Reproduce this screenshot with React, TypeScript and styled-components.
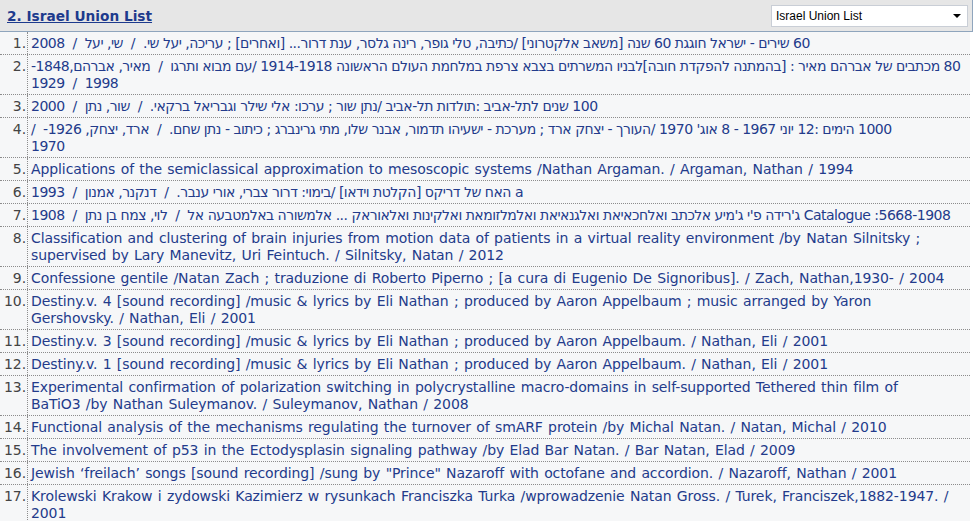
import React from "react";
import styled, { createGlobalStyle } from "styled-components";

const Global = createGlobalStyle`
  html, body { margin: 0; padding: 0; background: #ffffff; }
  body { font-family: "DejaVu Sans", Verdana, sans-serif; }
`;

const Page = styled.div`
  width: 977px;
  height: 521px;
  overflow: hidden;
  background: #ffffff;
`;

const Header = styled.div`
  width: 973px;
  height: 32px;
  box-sizing: border-box;
  background: #e6e6e6;
  border-right: 1px solid #8fa5bd;
  border-bottom: 1px solid #8fa5bd;
  display: flex;
  align-items: center;
  justify-content: space-between;
  padding: 0 4px 0 7px;
`;

const Title = styled.a`
  font-family: "DejaVu Sans", Verdana, sans-serif;
  font-weight: bold;
  font-size: 13.7px;
  color: #1d3a8d;
  text-decoration: underline;
  cursor: pointer;
`;

const SelectBox = styled.div`
  width: 197px;
  height: 22px;
  box-sizing: border-box;
  background: #ffffff;
  border: 1px solid #c9ced6;
  display: flex;
  align-items: center;
  justify-content: space-between;
  padding: 0 6px 0 4px;
  font-family: "Liberation Sans", Arial, sans-serif;
  font-size: 12px;
  color: #000;
`;

const Arrow = styled.span`
  width: 0;
  height: 0;
  border-left: 4px solid transparent;
  border-right: 4px solid transparent;
  border-top: 4px solid #000;
`;

const List = styled.div`
  width: 970px;
  background: #f6f7f8;
`;

const Row = styled.div`
  display: flex;
  border-bottom: 1px dotted #8c8c8c;
`;

const Num = styled.div`
  width: 28px;
  flex: none;
  box-sizing: border-box;
  text-align: right;
  padding: 3px 1px 2px 0;
  border-right: 1px dotted #8c8c8c;
  font-size: 14px;
  letter-spacing: -0.1px;
  line-height: 17px;
  color: #444;
`;

const Cell = styled.div`
  flex: 1;
  min-width: 0;
  padding: 3px 5px 2px 3px;
  font-size: 14px;
  letter-spacing: -0.1px;
  word-spacing: 1px;
  line-height: 17px;
  text-align: left;
`;

const Link = styled.a`
  color: #233b8b;
  text-decoration: none;
  cursor: pointer;
`;

const Rtl = styled.bdi`
  letter-spacing: -0.5px;
  word-spacing: 0;
`;

const S = "\u00a0 /\u00a0 ";
const N = "\u00a0/";

const items: React.ReactNode[] = [
  <Rtl dir="rtl">{`60 שירים - ישראל חוגגת 60 שנה [משאב אלקטרוני] /כתיבה, טלי גופר, רינה גלסר, ענת דרור... [ואחרים] ; עריכה, יעל שי.${S}שי, יעל${S}2008`}</Rtl>,
  <>
    <Rtl dir="rtl">{`80 מכתבים של אברהם מאיר : [בהמתנה להפקדת חובה]לבניו המשרתים בצבא צרפת במלחמת העולם הראשונה 1914-1918 /עם מבוא ותרגו${S}מאיר, אברהם,1848-`}</Rtl>
    <br />
    <Rtl dir="ltr">{`1929\u00a0 /\u00a0 1998`}</Rtl>
  </>,
  <Rtl dir="rtl">{`100 שנים לתל-אביב :תולדות תל-אביב /נתן שור ; ערכו: אלי שילר וגבריאל ברקאי.${S}שור, נתן${S}2000`}</Rtl>,
  <Rtl dir="rtl">
    {`1000 הימים :12 יוני 1967 - 8 אוג' 1970 /העורך - יצחק ארד ; מערכת - ישעיהו תדמור, אבנר שלו, מתי גרינברג ; כיתוב - נתן שחם.${S}ארד, יצחק, 1926-\u00a0 /`}
    <br />
    1970
  </Rtl>,
  `Applications of the semiclassical approximation to mesoscopic systems${N}Nathan Argaman.${N} Argaman, Nathan${N} 1994`,
  <Rtl dir="rtl">{`a האח של דריקס [הקלטת וידאו] /בימוי: דרור צברי, אורי ענבר.${S}דנקנר, אמנון${S}1993`}</Rtl>,
  <Rtl dir="rtl">
    <bdi dir="ltr">Catalogue :5668-1908</bdi>
    {` ג'רידה פ'י ג'מיע אלכתב ואלחכאיאת ואלגנאיאת ואלמלזומאת ואלקינות ואלאוראק ... אלמשורה באלמטבעה אל${S}לוי, צמח בן נתן${S}1908`}
  </Rtl>,
  `Classification and clustering of brain injuries from motion data of patients in a virtual reality environment${N}by Natan Silnitsky\u00a0; supervised by Lary Manevitz, Uri Feintuch.${N} Silnitsky, Natan${N} 2012`,
  `Confessione gentile${N}Natan Zach\u00a0; traduzione di Roberto Piperno\u00a0; [a cura di Eugenio De Signoribus].${N} Zach, Nathan,1930-${N} 2004`,
  `Destiny.v. 4 [sound recording]${N}music & lyrics by Eli Nathan\u00a0; produced by Aaron Appelbaum\u00a0; music arranged by Yaron Gershovsky.${N} Nathan, Eli${N} 2001`,
  `Destiny.v. 3 [sound recording]${N}music & lyrics by Eli Nathan\u00a0; produced by Aaron Appelbaum.${N} Nathan, Eli${N} 2001`,
  `Destiny.v. 1 [sound recording]${N}music & lyrics by Eli Nathan\u00a0; produced by Aaron Appelbaum.${N} Nathan, Eli${N} 2001`,
  `Experimental confirmation of polarization switching in polycrystalline macro-domains in self-supported Tethered thin film of BaTiO3${N}by Nathan Suleymanov.${N} Suleymanov, Nathan${N} 2008`,
  `Functional analysis of the mechanisms regulating the turnover of smARF protein${N}by Michal Natan.${N} Natan, Michal${N} 2010`,
  `The involvement of p53 in the Ectodysplasin signaling pathway${N}by Elad Bar Natan.${N} Bar Natan, Elad${N} 2009`,
  `Jewish \u2018freilach\u2019 songs [sound recording]${N}sung by "Prince" Nazaroff with octofane and accordion.${N} Nazaroff, Nathan${N} 2001`,
  `Krolewski Krakow i zydowski Kazimierz w rysunkach Franciszka Turka${N}wprowadzenie Natan Gross.${N} Turek, Franciszek,1882-1947.${N} 2001`,
];

export default function App() {
  return (
    <Page>
      <Global />
      <Header>
        <Title>2. Israel Union List</Title>
        <SelectBox>
          <span>Israel Union List</span>
          <Arrow />
        </SelectBox>
      </Header>
      <List>
        {items.map((content, i) => (
          <Row key={i}>
            <Num>{i + 1}.</Num>
            <Cell>
              <Link>{content}</Link>
            </Cell>
          </Row>
        ))}
      </List>
    </Page>
  );
}
